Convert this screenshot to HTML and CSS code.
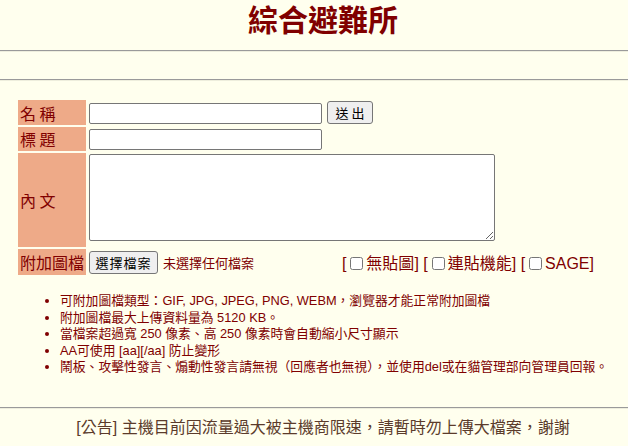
FILE: index.html
```html
<!DOCTYPE html>
<html lang="zh-Hant">
<head>
    <meta charset="UTF-8">
    <meta name="viewport" content="width=device-width, initial-scale=1.0">
    <title>綜合避難所</title>
    <link rel="stylesheet" href="styles.css">
</head>
<body>
    <h1 class="board-title">綜合避難所</h1>
    <hr class="sep">
    <div class="top-links"></div>
    <hr class="sep">

    <form id="postForm" class="post-form">
        <div class="form-label">名 稱</div>
        <div class="form-field row-name">
            <input type="text" class="text-input" name="name">
            <button type="submit" class="btn">送 出</button>
        </div>

        <div class="form-label">標 題</div>
        <div class="form-field">
            <input type="text" class="text-input" name="sub">
        </div>

        <div class="form-label">內 文</div>
        <div class="form-field row-com">
            <textarea class="com-input" name="com"></textarea>
        </div>

        <div class="form-label">附加圖檔</div>
        <div class="form-field row-file">
            <button type="button" class="btn btn-file">選擇檔案</button>
            <span class="file-status">未選擇任何檔案</span>
            <span class="options">
                [<label><input type="checkbox" name="noimg">無貼圖</label>]
                [<label><input type="checkbox" name="up_series">連貼機能</label>]
                [<label><input type="checkbox" name="sage">SAGE</label>]
            </span>
        </div>
    </form>

    <ul class="rules">
        <li>可附加圖檔類型：GIF, JPG, JPEG, PNG, WEBM，瀏覽器才能正常附加圖檔</li>
        <li>附加圖檔最大上傳資料量為 5120 KB。</li>
        <li>當檔案超過寬 250 像素、高 250 像素時會自動縮小尺寸顯示</li>
        <li>AA可使用 [aa][/aa] 防止變形</li>
        <li>鬧板、攻擊性發言、煽動性發言請無視（回應者也無視），並使用del或在貓管理部向管理員回報。</li>
    </ul>

    <hr class="sep sep-notice">
    <p class="notice">[公告] 主機目前因流量過大被主機商限速，請暫時勿上傳大檔案，謝謝</p>
</body>
</html>
```

FILE: styles.css
```css
body {
    margin: 0;
    background: #ffffee;
    color: #800000;
    font-family: "Liberation Sans", "Noto Sans CJK TC", sans-serif;
}

.board-title {
    margin: 0;
    padding: 3px 0 0 18px;
    height: 47px;
    font-size: 30px;
    line-height: 36px;
    font-weight: bold;
    text-align: center;
    color: #800000;
}

.sep {
    margin: 0;
    border: none;
    border-top: 1px solid #9a9a9a;
    border-bottom: 1px solid #eeeedd;
}

.top-links {
    height: 27px;
}

.post-form {
    display: grid;
    grid-template-columns: 68px 508px;
    gap: 2px;
    margin: 19px 0 0 18px;
}

.form-label {
    display: flex;
    align-items: center;
    padding: 0 2px;
    background: #eeaa88;
    color: #800000;
    font-family: "Noto Sans CJK TC", sans-serif;
    font-size: 16px;
    font-weight: 400;
    white-space: nowrap;
}

.form-field {
    display: flex;
    align-items: flex-end;
    gap: 5px;
    padding: 1px;
}

.text-input {
    box-sizing: border-box;
    width: 233px;
    height: 21px;
    margin: 0;
    padding: 1px 2px;
    border: 1px solid #767676;
    border-radius: 2px;
    background: white;
}

.btn {
    box-sizing: border-box;
    height: 23px;
    margin: 0;
    padding: 0 6px;
    border: 1px solid #767676;
    border-radius: 3px;
    background: #efefef;
    color: #000;
    font-family: "Noto Sans CJK TC", sans-serif;
    font-size: 13px;
}

.row-name .btn {
    width: 46px;
}

.row-com {
    padding: 1px 1px 6px;
}

.com-input {
    box-sizing: border-box;
    width: 406px;
    height: 87px;
    margin: 0;
    border: 1px solid #767676;
    border-radius: 2px;
    background: white;
    resize: both;
}

.row-file {
    align-items: center;
    gap: 0;
}

.btn-file {
    width: 69px;
    padding: 0;
    letter-spacing: 1px;
}

.file-status {
    margin-left: 5px;
    font-family: "Noto Sans CJK TC", sans-serif;
    font-size: 13px;
    color: #800000;
}

.options {
    margin-left: auto;
    margin-right: 1px;
    font-size: 16px;
}

.options label {
    white-space: nowrap;
}

.options input {
    width: 13px;
    height: 13px;
    margin: 0 3px 0 4px;
    vertical-align: -1px;
}

.rules {
    margin: 18px 0 0;
    padding-left: 60px;
    font-size: 12.8px;
    line-height: 16.6px;
}

.sep-notice {
    margin-top: 31px;
}

.notice {
    margin: 5px 0 0;
    padding-left: 18px;
    text-align: center;
    font-size: 16px;
    color: #5b3b2b;
}
```
